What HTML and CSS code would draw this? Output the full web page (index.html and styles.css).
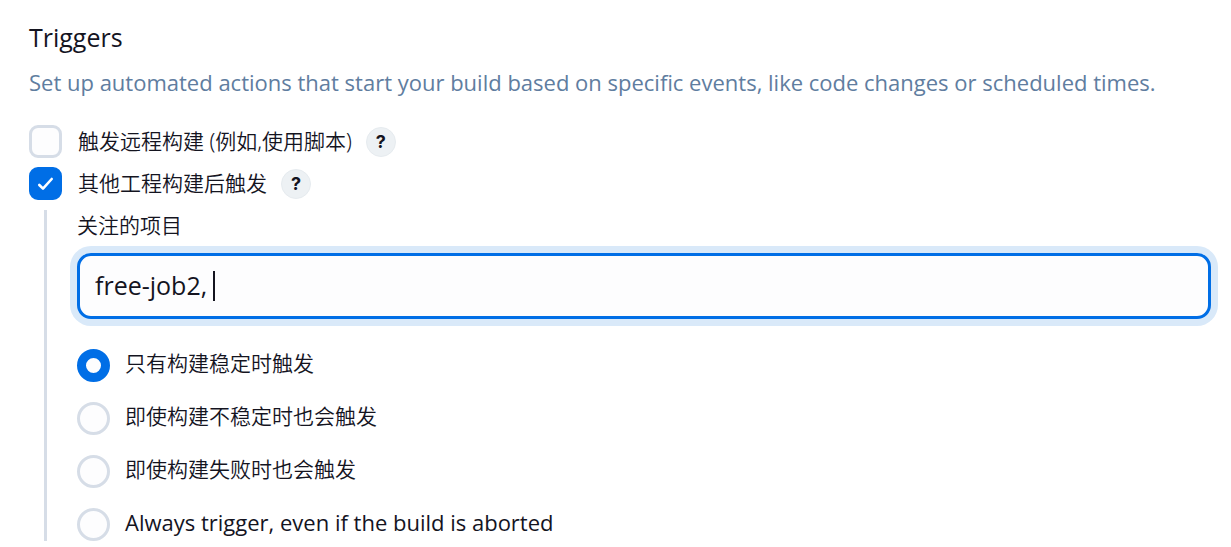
FILE: index.html
```html
<!DOCTYPE html>
<html lang="zh-CN">
<head>
<meta charset="utf-8">
<meta name="viewport" content="width=device-width, initial-scale=1">
<title>Triggers</title>
<link rel="stylesheet" href="styles.css">
</head>
<body>
<main class="section">
  <h2 class="section-title">Triggers</h2>
  <p class="section-description">Set up automated actions that start your build based on specific events, like code changes or scheduled times.</p>

  <div class="trigger-list">
    <div class="trigger">
      <input class="checkbox" type="checkbox" id="remote">
      <label class="trigger-label" for="remote">触发远程构建 (例如,使用脚本)</label>
      <button class="help" type="button">?</button>
    </div>
    <div class="trigger">
      <span class="check-wrap">
        <input class="checkbox" type="checkbox" id="upstream" checked>
        <svg class="check-mark" viewBox="0 0 33 33" aria-hidden="true"><path d="M10.3 18l3.7 3.6L22.7 12"/></svg>
      </span>
      <label class="trigger-label" for="upstream">其他工程构建后触发</label>
      <button class="help" type="button">?</button>
    </div>
  </div>

  <div class="nested">
    <label class="field-label" for="projects">关注的项目</label>
    <div class="field">
      <input class="text-input" type="text" id="projects" value="free-job2, ">
      <span class="caret"></span>
    </div>
    <div class="radio-list">
      <label class="radio-row"><input class="radio" type="radio" name="threshold" checked><span class="radio-text">只有构建稳定时触发</span></label>
      <label class="radio-row"><input class="radio" type="radio" name="threshold"><span class="radio-text">即使构建不稳定时也会触发</span></label>
      <label class="radio-row"><input class="radio" type="radio" name="threshold"><span class="radio-text">即使构建失败时也会触发</span></label>
      <label class="radio-row"><input class="radio" type="radio" name="threshold"><span class="radio-text latin" lang="en">Always trigger, even if the build is aborted</span></label>
    </div>
  </div>
</main>
</body>
</html>
```

FILE: styles.css
```css
:root {
  --text: #14141f;
  --muted: #607d9f;
  --line: #d6dde7;
  --accent: #006ee6;
  --field: #fdfdfe;
}

* { box-sizing: border-box; }

body {
  margin: 0;
  background: #fff;
  color: var(--text);
  font-family: "Open Sans", "Noto Sans CJK SC", sans-serif;
  font-size: 21px;
  line-height: 33px;
}

.section { padding: 21px 20px 7px 29px; }

.section-title {
  margin: 0;
  font-size: 25px;
  font-weight: 400;
}

.section-description {
  margin: 12px 0 26px;
  color: var(--muted);
  font-size: 22px;
}

.trigger-list {
  display: flex;
  flex-direction: column;
  gap: 9px;
}

.trigger {
  display: flex;
  align-items: center;
  height: 33px;
}

.trigger-label,
.field-label,
.radio-text { font-weight: 350; }

.trigger-label {
  margin: 0 14px 0 16px;
  font-family: "Noto Sans", "Noto Sans CJK SC", sans-serif;
}

.radio-text { padding-bottom: 4px; }

.latin {
  font-size: 22px;
  font-weight: 400;
}

.check-wrap {
  position: relative;
  display: flex;
}

.checkbox,
.radio {
  appearance: none;
  flex: none;
  width: 33px;
  height: 33px;
  margin: 0;
  border: 3px solid var(--line);
  background: var(--field);
}

.checkbox { border-radius: 9px; }

.checkbox:checked {
  border-color: var(--accent);
  background: var(--accent);
}

.check-mark {
  position: absolute;
  inset: 0;
  fill: none;
  stroke: #fff;
  stroke-width: 2.6;
  stroke-linecap: round;
  stroke-linejoin: round;
  pointer-events: none;
}

.help {
  width: 30px;
  height: 30px;
  padding: 0;
  border: 1px solid #e6ebef;
  border-radius: 50%;
  background: #edf1f4;
  color: var(--text);
  font-family: Inter, sans-serif;
  font-size: 18px;
  font-weight: 700;
  line-height: 28px;
}

.nested {
  margin: 10px 0 0 15px;
  padding-left: 30px;
  border-left: 3px solid var(--line);
}

.field-label {
  display: block;
  line-height: 31px;
}

.field {
  position: relative;
  margin: 12px 0 30px;
}

.text-input {
  display: block;
  width: 100%;
  height: 66px;
  padding: 0 15px 2px;
  border: 3px solid var(--accent);
  border-radius: 14px;
  outline: none;
  background: var(--field);
  box-shadow: 0 0 0 7px #d9e9f9;
  color: var(--text);
  font-family: inherit;
  font-size: 25px;
}

.caret {
  position: absolute;
  top: 18px;
  left: 136px;
  width: 2px;
  height: 30px;
  background: var(--text);
}

.radio-list {
  display: flex;
  flex-direction: column;
  gap: 20px;
}

.radio-row {
  display: flex;
  align-items: center;
  gap: 15px;
  height: 33px;
}

.radio { border-radius: 50%; }

.radio:checked {
  border: 9px solid var(--accent);
}
```
